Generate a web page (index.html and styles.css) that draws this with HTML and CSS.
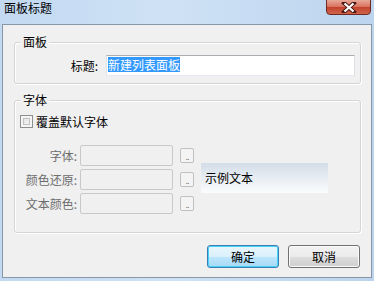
FILE: index.html
```html
<!DOCTYPE html>
<html lang="zh">
  <head>
    <meta charset="UTF-8" />
    <title>面板标题</title>
    <link rel="stylesheet" href="styles.css">
  </head>
  <body>
    <div class="window">
      <div class="titlebar">面板标题</div>
      <div class="close">
        <svg width="16" height="11" viewBox="0 0 16 11">
          <path d="M3 1 L13 10 M13 1 L3 10" stroke="#4a1a14" stroke-width="4" stroke-linecap="square" />
          <path d="M3.5 1.5 L12.5 9.5 M12.5 1.5 L3.5 9.5" stroke="#fff" stroke-width="2.2" />
        </svg>
      </div>
      <div class="client">
        <div class="group group-panel">
          <div class="group-title">面板</div>
          <div class="title-row">
            <span class="title-label">标题:</span>
            <div class="textbox"><span class="sel">新建列表面板</span></div>
          </div>
        </div>

        <div class="group group-font">
          <div class="group-title">字体</div>
          <label class="check-row">
            <span class="checkbox"></span>
            <span>覆盖默认字体</span>
          </label>
          <div class="font-area">
            <div class="font-rows">
              <div class="font-row">
                <span class="font-label">字体:</span>
                <span class="field"></span>
                <span class="dots">..</span>
              </div>
              <div class="font-row">
                <span class="font-label">颜色还原:</span>
                <span class="field"></span>
                <span class="dots">..</span>
              </div>
              <div class="font-row">
                <span class="font-label">文本颜色:</span>
                <span class="field"></span>
                <span class="dots">..</span>
              </div>
            </div>
            <div class="sample">示例文本</div>
          </div>
        </div>

        <div class="buttons">
          <button class="btn btn-default">确定</button>
          <button class="btn">取消</button>
        </div>
      </div>
    </div>
  </body>
</html>
```

FILE: styles.css
```css
body {
  margin: 0;
  font-family: "Noto Sans CJK SC", "DejaVu Sans", sans-serif;
  font-size: 12px;
  color: #000;
}
.window {
  position: relative;
  width: 374px;
  height: 281px;
  background: linear-gradient(90deg, #c2d9f1 0%, #cfe2f5 45%, #bcd4ee 100%);
  overflow: hidden;
}
.titlebar {
  height: 24px;
  padding: 1px 0 0 4px;
  box-sizing: border-box;
  line-height: 14px;
}
.close {
  position: absolute;
  top: -1px;
  right: 3px;
  width: 45px;
  height: 16px;
  box-sizing: border-box;
  border: 1px solid #6e2a22;
  border-radius: 0 0 4px 4px;
  background: linear-gradient(#e9a898, #d8705d 50%, #c2402a 51%, #d0664d);
  display: flex;
  justify-content: center;
  align-items: center;
}
.client {
  margin: 0 2px;
  height: 254px;
  box-sizing: border-box;
  border: 1px solid #8797a8;
  background: #f0f0f0;
  display: flex;
  flex-direction: column;
}
.group {
  border: 1px solid #d5d5d5;
  border-radius: 3px;
  margin: 0 10px 0 11px;
  box-shadow: inset 1px 1px 0 #fff, 1px 1px 0 #fff;
}
.group-title {
  width: fit-content;
  margin: -8px 0 0 6px;
  padding: 0 2px;
  line-height: 14px;
  background: #f0f0f0;
}
.group-panel {
  margin-top: 17px;
  padding-bottom: 7px;
}
.title-row {
  display: flex;
  align-items: center;
  margin-top: 6px;
}
.title-label {
  width: 83px;
  text-align: right;
  margin-right: 8px;
}
.textbox {
  width: 249px;
  height: 21px;
  box-sizing: border-box;
  border: 1px solid #abadb3;
  border-color: #abadb3 #dbdfe6 #e3e9ef #e2e3ea;
  background: #fff;
  padding: 1px 0 0 1px;
  line-height: 16px;
}
.sel {
  background: #3399ff;
  color: #fff;
  display: inline-block;
  line-height: 15px;
}
.group-font {
  margin-top: 16px;
  height: 133px;
  box-sizing: border-box;
}
.check-row {
  display: flex;
  align-items: center;
  margin: 7px 0 0 5px;
  line-height: 15px;
}
.checkbox {
  width: 13px;
  height: 13px;
  box-sizing: border-box;
  border: 1px solid #8e8f8f;
  background: linear-gradient(135deg, #dcdcdc, #fbfbfb);
  box-shadow: inset 0 0 0 2px #f4f4f4, inset 0 0 0 3px #c2c2c2;
  margin-right: 3px;
}
.font-area {
  display: flex;
  margin-top: 16px;
}
.font-rows {
  display: flex;
  flex-direction: column;
  gap: 3px;
}
.font-row {
  display: flex;
  align-items: center;
  height: 21px;
}
.font-label {
  width: 62px;
  text-align: right;
  margin-right: 3px;
  color: #6d6d6d;
}
.field {
  width: 93px;
  height: 21px;
  box-sizing: border-box;
  border: 1px solid #c9c9c9;
  border-radius: 2px;
}
.dots {
  width: 14px;
  height: 15px;
  box-sizing: border-box;
  margin-left: 7px;
  border: 1px solid #c0c0c0;
  border-radius: 2px;
  background: #f4f4f4;
  color: #8a8a8a;
  font-size: 9px;
  line-height: 16px;
  text-align: center;
  letter-spacing: -1px;
}
.sample {
  align-self: center;
  width: 127px;
  height: 30px;
  margin: -3px 0 0 7px;
  padding-left: 4px;
  box-sizing: border-box;
  line-height: 30px;
  background: linear-gradient(#d3dde8, #fbfcfd);
}
.buttons {
  display: flex;
  justify-content: flex-end;
  gap: 9px;
  margin: 12px 11px 0 0;
}
.btn {
  width: 72px;
  height: 23px;
  box-sizing: border-box;
  border: 1px solid #707070;
  border-radius: 3px;
  font-family: inherit;
  font-size: 12px;
  padding: 0;
  background: linear-gradient(#f2f2f2 0%, #ebebeb 50%, #dddddd 51%, #cfcfcf 100%);
  box-shadow: inset 0 0 0 1px #fcfcfc;
}
.btn-default {
  border-color: #3c7fb1;
  background: linear-gradient(#eaf6fd 0%, #d9f0fc 50%, #bee6fd 51%, #a7d9f5 100%);
  box-shadow: inset 0 0 0 1px #48d1f9;
}
```
